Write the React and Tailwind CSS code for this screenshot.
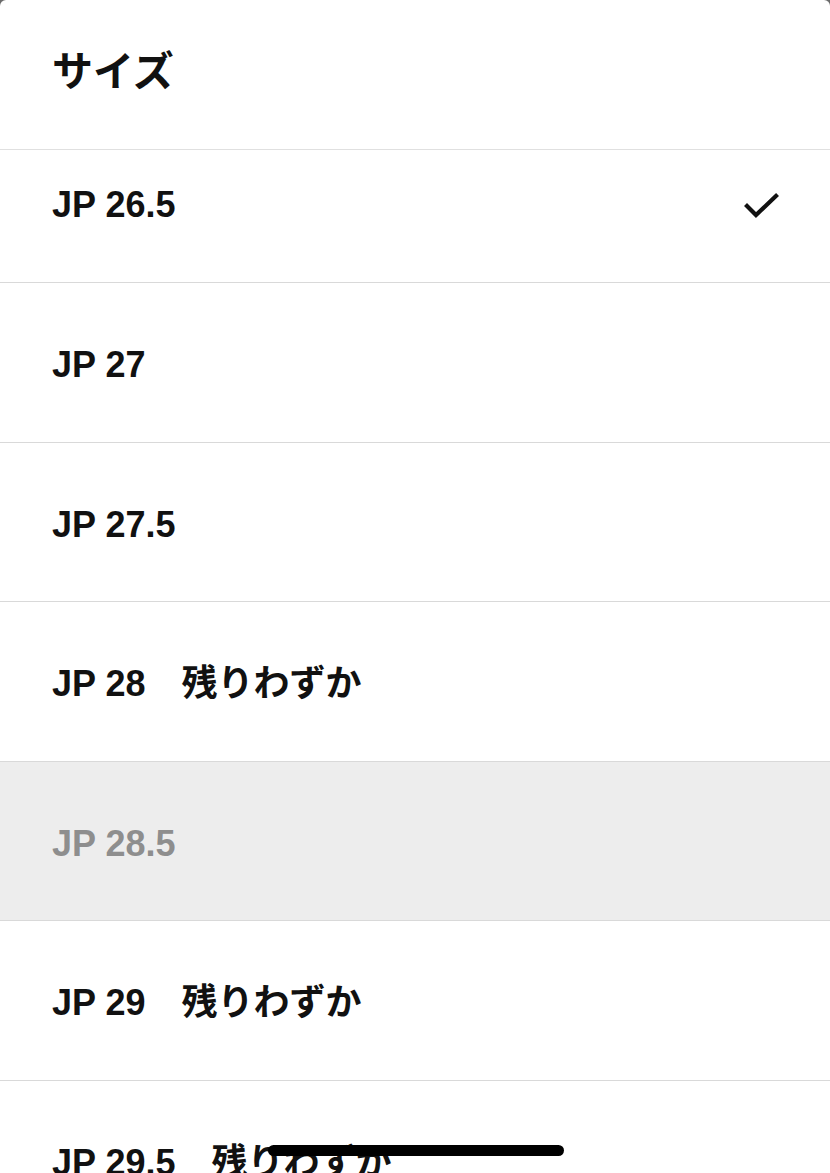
import React from 'react';

const sizes = [
  { label: 'JP 26.5', selected: true, first: true },
  { label: 'JP 27' },
  { label: 'JP 27.5' },
  { label: 'JP 28', note: '残りわずか' },
  { label: 'JP 28.5', disabled: true },
  { label: 'JP 29', note: '残りわずか' },
  { label: 'JP 29.5', note: '残りわずか' },
];

const font = { fontFamily: '"Liberation Sans", "Noto Sans CJK JP", sans-serif' };

const Check = () => (
  <svg width="36" height="30" viewBox="0 0 36 30" fill="none">
    <path d="M3 14 L12 23 L32 4" stroke="#111" strokeWidth="4.2" strokeLinecap="square" strokeLinejoin="miter" />
  </svg>
);

export default function App() {
  return (
    <div className="bg-[#6b6b6b] w-[830px] h-[1173px] overflow-hidden" style={font}>
      <div className="relative bg-white rounded-t-[6px] h-full overflow-hidden">
        {/* cabeçalho */}
        <div className="h-[150px] flex items-center px-[52px] border-b-[1.5px] border-[#e0e0e0]">
          <h1 className="text-[41px] font-bold text-[#111] leading-none -mt-[4px]">サイズ</h1>
        </div>

        {/* lista de tamanhos */}
        <ul>
          {sizes.map((s) => (
            <li
              key={s.label}
              className={`flex items-center justify-between px-[52px] border-b-[1.5px] border-[#d9d9d9] ${
                s.first ? 'h-[133px] pb-[22px]' : 'h-[159.5px] pt-[6px]'
              } ${s.disabled ? 'bg-[#ededed]' : 'bg-white'}`}
            >
              <span
                className={`text-[36px] font-bold leading-none whitespace-pre ${
                  s.disabled ? 'text-[#8e8e8e]' : 'text-[#111]'
                }`}
              >
                {s.label}
                {s.note ? '　' + s.note : ''}
              </span>
              {s.selected && (
                <span className="mr-[-2px] mt-[4px]">
                  <Check />
                </span>
              )}
            </li>
          ))}
        </ul>

        {/* home indicator */}
        <div className="absolute left-[268px] top-[1145px] w-[296px] h-[11px] rounded-full bg-black" />
      </div>
    </div>
  );
}
